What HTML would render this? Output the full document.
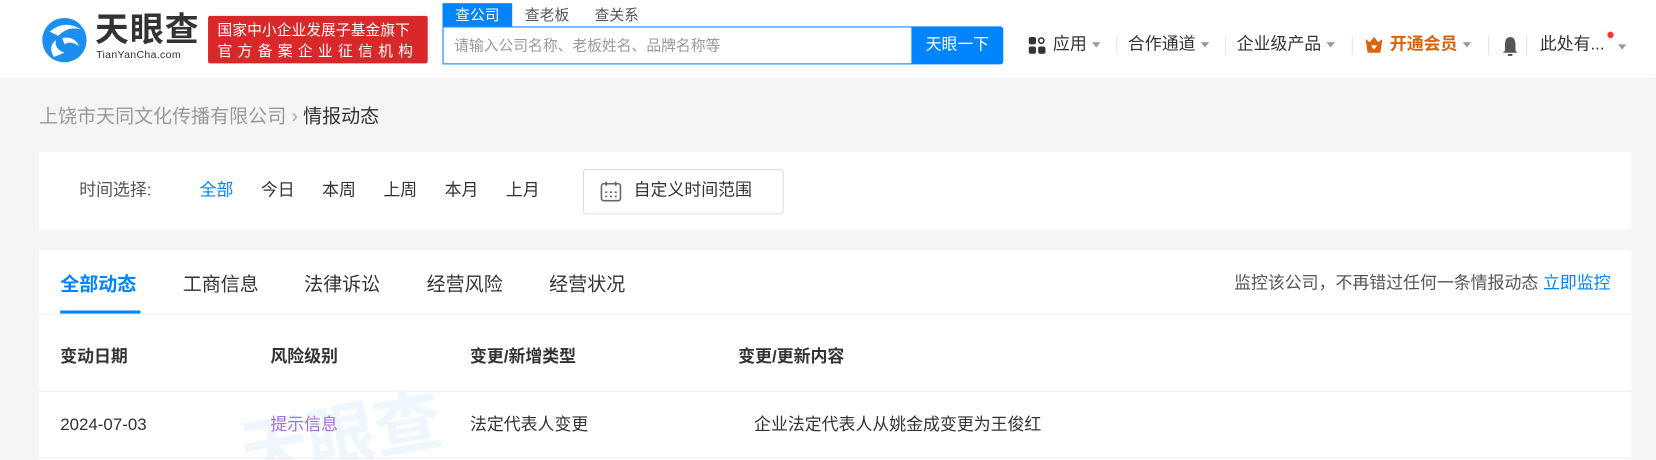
<!DOCTYPE html>
<html><head><meta charset="utf-8"><style>
*{margin:0;padding:0;box-sizing:border-box}
html,body{width:1656px;height:460px;overflow:hidden;background:#f5f5f5}
body{font-family:"Liberation Sans","Noto Sans CJK SC",sans-serif;color:#333;position:relative}
#w{position:absolute;left:0;top:0;width:1568px;height:435px;overflow:hidden;transform:scale(1.0561);transform-origin:0 0}
.hdr{position:absolute;left:0;top:0;width:1568px;height:75px;background:#fff;border-bottom:1px solid #eee}
.abs{position:absolute;white-space:nowrap;line-height:1.3}
.card{position:absolute;background:#fff;left:37px;width:1508px}
.nav{font-size:16px;color:#333}
.tri{display:inline-block;width:0;height:0;border-left:4px solid transparent;border-right:4px solid transparent;border-top:5px solid #999;vertical-align:middle;margin-left:5px}
.sep{position:absolute;top:34px;width:1px;height:18px;background:#e5e5e5}
.c16{font-size:16px;line-height:24px}
</style></head><body><div id="w">
<div class="hdr">
  <svg class="abs" style="left:37px;top:14px" width="48" height="48" viewBox="0 0 48 48">
    <circle cx="24" cy="24" r="21" fill="#1c8ef0"/>
    <path d="M10 16 Q24 4 40 14 Q28 10 18 20 Z" fill="#fff"/>
    <path d="M14 40 Q8 30 16 24 Q14 32 24 36 Z" fill="#fff"/>
    <path d="M22 22 Q34 20 38 30 Q30 24 24 28 Z" fill="#fff"/>
  </svg>
  <div class="abs" style="left:90px;top:10px;font-size:32px;line-height:36px;font-weight:bold;color:#333;letter-spacing:1px">天眼查</div>
  <div class="abs" style="left:91px;top:47px;font-size:10px;line-height:12px;color:#333;letter-spacing:0.3px">TianYanCha.com</div>
  <div class="abs" style="left:197px;top:15px;width:208px;height:45px;background:#d9282a;border-radius:2px;color:#fff;font-size:14px;line-height:20px;padding:3px 0 0 9px">国家中小企业发展子基金旗下<br><span style="letter-spacing:5px">官方备案企业征信机构</span></div>
  <div class="abs" style="left:419px;top:3px;width:66px;height:22px;background:#0084ff;color:#fff;font-size:14px;line-height:22px;text-align:center">查公司</div>
  <div class="abs" style="left:497px;top:3px;font-size:14px;line-height:22px;color:#555">查老板</div>
  <div class="abs" style="left:563px;top:3px;font-size:14px;line-height:22px;color:#555">查关系</div>
  <div class="abs" style="left:419px;top:25px;width:445px;height:36px;border:1px solid #0084ff;border-right:none;font-size:14px;color:#999;line-height:34px;padding-left:10px">请输入公司名称、老板姓名、品牌名称等</div>
  <div class="abs" style="left:863px;top:25px;width:87px;height:36px;background:#0084ff;border-radius:0 3px 3px 0;color:#fff;font-size:15px;line-height:36px;text-align:center">天眼一下</div>
  <svg class="abs" style="left:974px;top:35px" width="16" height="16"><rect x="0" y="0" width="7" height="7" rx="2" fill="#333"/><circle cx="12" cy="3.5" r="2.5" fill="none" stroke="#333" stroke-width="1.5"/><rect x="0" y="9" width="7" height="7" rx="2" fill="#333"/><rect x="9" y="9" width="7" height="7" rx="2" fill="#333"/></svg>
  <div class="abs nav" style="left:997px;top:33px">应用<span class="tri"></span></div>
  <div class="sep" style="left:1057px"></div>
  <div class="abs nav" style="left:1068px;top:33px">合作通道<span class="tri"></span></div>
  <div class="sep" style="left:1160px"></div>
  <div class="abs nav" style="left:1171px;top:33px">企业级产品<span class="tri"></span></div>
  <div class="sep" style="left:1280px"></div>
  <svg class="abs" style="left:1292px;top:35px" width="18" height="16" viewBox="0 0 18 16"><path d="M1 2 L5 5 L9 0 L13 5 L17 2 L15 15 L3 15 Z" fill="#d9620b"/><path d="M6 8 L9 12 L12 8 Z" fill="#fff"/></svg>
  <div class="abs nav" style="left:1316px;top:33px;color:#d9620b;font-weight:bold">开通会员<span class="tri"></span></div>
  <div class="sep" style="left:1409px"></div>
  <svg class="abs" style="left:1422px;top:34px" width="16" height="20" viewBox="0 0 16 20"><path d="M8 1 C4 1 3 5 3 9 L3 14 L1 16 L15 16 L13 14 L13 9 C13 5 12 1 8 1Z" fill="#555"/><rect x="6" y="17" width="4" height="2" fill="#555"/></svg>
  <div class="sep" style="left:1445px"></div>
  <div class="abs nav" style="left:1458px;top:33px">此处有...</div>
  <div class="abs" style="left:1522px;top:30px;width:6px;height:6px;border-radius:3px;background:#f33"></div>
  <span class="abs tri" style="left:1527px;top:42px"></span>
</div>
<div class="abs" style="left:37px;top:97px;font-size:18px;line-height:26px;color:#999">上饶市天同文化传播有限公司 <span style="color:#aaa">›</span> <span style="color:#333">情报动态</span></div>
<div class="card" style="top:144px;height:73px">
  <div class="abs c16" style="left:38px;top:25px;color:#555">时间选择:</div>
  <div class="abs c16" style="left:152px;top:25px;color:#0084ff">全部</div>
  <div class="abs c16" style="left:210px;top:25px">今日</div>
  <div class="abs c16" style="left:268px;top:25px">本周</div>
  <div class="abs c16" style="left:326px;top:25px">上周</div>
  <div class="abs c16" style="left:384px;top:25px">本月</div>
  <div class="abs c16" style="left:442px;top:25px">上月</div>
  <div class="abs" style="left:515px;top:16px;width:190px;height:43px;border:1px solid #ddd;border-radius:3px"></div>
  <svg class="abs" style="left:531px;top:27px" width="21" height="21" viewBox="0 0 21 21"><rect x="1.5" y="3" width="18" height="16" rx="2" fill="none" stroke="#666" stroke-width="1.5"/><path d="M6 1v4M15 1v4" stroke="#666" stroke-width="1.5"/><path d="M5 11h2M9.5 11h2M14 11h2M5 15h2M9.5 15h2M14 15h2" stroke="#666" stroke-width="1.5"/></svg>
  <div class="abs c16" style="left:563px;top:25px">自定义时间范围</div>
</div>
<div class="card" style="top:237px;height:198px;overflow:hidden">
  <div class="abs" style="left:20px;top:19px;font-size:18px;line-height:26px;color:#0084ff;font-weight:bold">全部动态</div>
  <div class="abs" style="left:20px;top:57px;width:76px;height:3px;background:#0084ff"></div>
  <div class="abs" style="left:136px;top:19px;font-size:18px;line-height:26px">工商信息</div>
  <div class="abs" style="left:251px;top:19px;font-size:18px;line-height:26px">法律诉讼</div>
  <div class="abs" style="left:367px;top:19px;font-size:18px;line-height:26px">经营风险</div>
  <div class="abs" style="left:483px;top:19px;font-size:18px;line-height:26px">经营状况</div>
  <div class="abs c16" style="left:1106px;top:20px;color:#555;width:382px;text-align:right">监控该公司，不再错过任何一条情报动态 <span style="color:#0084ff">立即监控</span></div>
  <div class="abs" style="left:0;top:60px;width:1508px;height:1px;background:#eee"></div>
  <div class="abs c16" style="left:20px;top:90px;font-weight:bold">变动日期</div>
  <div class="abs c16" style="left:219px;top:90px;font-weight:bold">风险级别</div>
  <div class="abs c16" style="left:408px;top:90px;font-weight:bold">变更/新增类型</div>
  <div class="abs c16" style="left:662px;top:90px;font-weight:bold">变更/更新内容</div>
  <div class="abs" style="left:0;top:133px;width:1508px;height:1px;background:#eee"></div>
  <div class="abs" style="left:190px;top:135px;font-size:64px;font-weight:bold;color:#eef6fe;transform:rotate(-10deg)">天眼查</div>
  <div class="abs c16" style="left:20px;top:154px">2024-07-03</div>
  <div class="abs c16" style="left:219px;top:154px;color:#a56fd6">提示信息</div>
  <div class="abs c16" style="left:408px;top:154px">法定代表人变更</div>
  <div class="abs c16" style="left:677px;top:154px">企业法定代表人从姚金成变更为王俊红</div>
  <div class="abs" style="left:0;top:196px;width:1508px;height:1px;background:#eee"></div>
</div>
</div></body></html>
